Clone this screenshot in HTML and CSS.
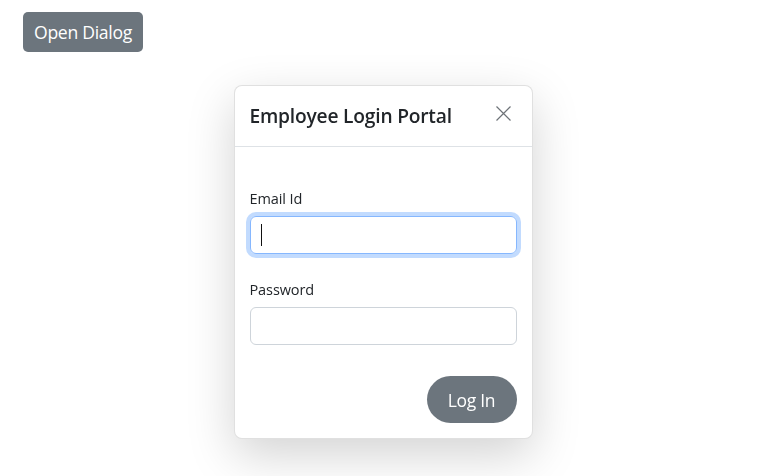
FILE: index.html
```html
<!DOCTYPE html>
<html lang="en">
<head>
<meta charset="utf-8">
<title>Employee Login Portal</title>
<link rel="stylesheet" href="styles.css">
</head>
<body>
<div class="page">
  <button class="btn btn-open" type="button">Open Dialog</button>
</div>
<div class="overlay">
  <div class="dialog" role="dialog" aria-labelledby="dlg-title">
    <div class="dialog-header">
      <h2 class="dialog-title" id="dlg-title">Employee Login Portal</h2>
      <button class="btn-close" type="button" aria-label="Close">
        <svg width="15" height="15" viewBox="0 0 15 15" aria-hidden="true">
          <path d="M0.5 0.5 L14.5 14.5 M14.5 0.5 L0.5 14.5" stroke="currentColor" stroke-width="1.2" fill="none"/>
        </svg>
      </button>
    </div>
    <form class="dialog-body">
      <div class="field">
        <label class="field-label" for="email">Email Id</label>
        <div class="input focused"><span class="caret"></span></div>
      </div>
      <div class="field">
        <label class="field-label" for="pwd">Password</label>
        <div class="input"></div>
      </div>
      <div class="actions">
        <button class="btn btn-login" type="button">Log In</button>
      </div>
    </form>
  </div>
</div>
</body>
</html>
```

FILE: styles.css
```css
* { box-sizing: border-box; }

html, body {
  margin: 0;
  background: #fff;
  font-family: "Open Sans", "Noto Sans", sans-serif;
  color: #212529;
}

.page {
  padding: 12px 23px;
}

.btn {
  border: none;
  color: #fff;
  background: #6c757d;
  font-family: inherit;
  cursor: pointer;
}

.btn-open {
  width: 120px;
  height: 40px;
  border-radius: 5px;
  font-size: 17.6px;
  letter-spacing: -0.3px;
  padding: 0;
}

.overlay {
  position: fixed;
  inset: 0;
  display: flex;
  justify-content: center;
  align-items: flex-start;
  padding-top: 85px;
}

.dialog {
  width: 299px;
  background: #fff;
  border: 1px solid rgba(0, 0, 0, 0.12);
  border-radius: 8px;
  box-shadow: 0 16px 48px rgba(0, 0, 0, 0.175);
}

.dialog-header {
  display: flex;
  align-items: flex-start;
  justify-content: space-between;
  padding: 16px 16px 16px 15px;
  border-bottom: 1px solid #dee2e6;
}

.dialog-title {
  margin: 0;
  font-size: 19.2px;
  line-height: 28px;
  font-weight: 600;
  letter-spacing: -0.2px;
}

.btn-close {
  width: 24px;
  height: 24px;
  margin-top: -1px;
  padding: 0;
  border: none;
  background: transparent;
  color: #6e7378;
  display: flex;
  align-items: center;
  justify-content: center;
}

.dialog-body {
  margin: 0;
  padding: 40px 15px 15px 15px;
}

.field {
  display: flex;
  flex-direction: column;
  margin-bottom: 24px;
}

.field-label {
  font-size: 14.5px;
  line-height: 24px;
  margin-bottom: 5px;
  letter-spacing: -0.1px;
}

.input {
  height: 38px;
  border: 1px solid #ced4da;
  border-radius: 6px;
  display: flex;
  align-items: center;
  padding-left: 10px;
}

.input.focused {
  border-color: #86b7fe;
  box-shadow: 0 0 0 4px #c2dbfe;
}

.caret {
  width: 1px;
  height: 22px;
  background: #111;
}

.actions {
  display: flex;
  justify-content: flex-end;
  padding-top: 7px;
}

.btn-login {
  width: 90px;
  height: 47px;
  border-radius: 24px;
  font-size: 17.5px;
  letter-spacing: -0.3px;
  padding: 0;
}
```
